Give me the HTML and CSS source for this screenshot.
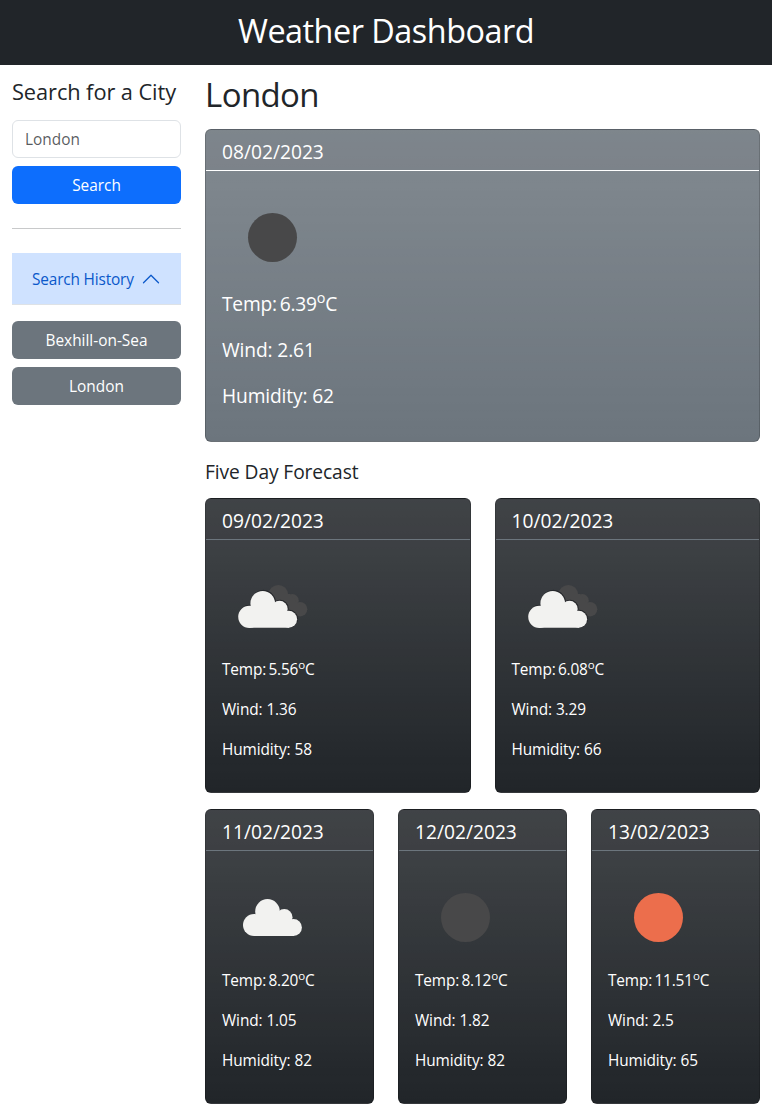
FILE: index.html
```html
<!DOCTYPE html>
<html lang="en">
<head>
<meta charset="utf-8">
<title>Weather Dashboard</title>
<link rel="stylesheet" href="styles.css">
</head>
<body>
<svg class="defs" width="0" height="0" aria-hidden="true">
  <defs>
    <g id="cloud">
      <circle cx="45.5" cy="44.4" r="12.3"/>
      <circle cx="32.1" cy="58" r="11.1"/>
      <circle cx="62.3" cy="50.2" r="8.2"/>
      <circle cx="71.4" cy="60.5" r="8.5"/>
      <path d="M32 58 36 46H58L68 53 72 60V69H32Z"/>
    </g>
  </defs>
</svg>
<header class="topbar"><h1 class="topbar-title">Weather Dashboard</h1></header>
<div class="layout">
  <aside class="sidebar">
    <h2 class="search-title">Search for a City</h2>
    <input class="search-input" type="text" placeholder="London">
    <button class="btn btn-primary">Search</button>
    <hr class="divider">
    <button class="history-toggle">
      <span>Search History</span>
      <svg class="chevron" viewBox="0 0 16 16"><path d="M2 11 8 5l6 6" fill="none" stroke="currentColor" stroke-linecap="round" stroke-linejoin="round"/></svg>
    </button>
    <div class="history">
      <button class="btn btn-secondary">Bexhill-on-Sea</button>
      <button class="btn btn-secondary">London</button>
    </div>
  </aside>
  <main class="content">
    <h2 class="city">London</h2>
    <section class="card card-today">
      <h3 class="card-header">08/02/2023</h3>
      <div class="card-body">
        <svg class="icon" viewBox="0 0 100 100"><circle cx="50.5" cy="50.5" r="24.5" fill="#484849"/></svg>
        <p class="temp">Temp: 6.39<sup>o</sup>C</p>
        <p>Wind: 2.61</p>
        <p>Humidity: 62</p>
      </div>
    </section>
    <h3 class="forecast-title">Five Day Forecast</h3>
    <div class="row row-two">
      <section class="card">
        <h3 class="card-header">09/02/2023</h3>
        <div class="card-body">
          <svg class="icon" viewBox="0 0 100 100">
            <g fill="#484849"><circle cx="56.3" cy="38.8" r="9.8"/><circle cx="70.3" cy="44.5" r="6.5"/><circle cx="78.1" cy="53.2" r="7.2"/><path d="M56 38H68L78 50V60H60Z"/></g>
            <use href="#cloud" transform="translate(-4.2 2.2)" fill="#242629" stroke="#242629" stroke-width=".8"/>
            <use href="#cloud" transform="translate(-4.8 2.8)" fill="#f2f2f0"/>
          </svg>
          <p class="temp">Temp: 5.56<sup>o</sup>C</p>
          <p>Wind: 1.36</p>
          <p>Humidity: 58</p>
        </div>
      </section>
      <section class="card">
        <h3 class="card-header">10/02/2023</h3>
        <div class="card-body">
          <svg class="icon" viewBox="0 0 100 100">
            <g fill="#484849"><circle cx="56.3" cy="38.8" r="9.8"/><circle cx="70.3" cy="44.5" r="6.5"/><circle cx="78.1" cy="53.2" r="7.2"/><path d="M56 38H68L78 50V60H60Z"/></g>
            <use href="#cloud" transform="translate(-4.2 2.2)" fill="#242629" stroke="#242629" stroke-width=".8"/>
            <use href="#cloud" transform="translate(-4.8 2.8)" fill="#f2f2f0"/>
          </svg>
          <p class="temp">Temp: 6.08<sup>o</sup>C</p>
          <p>Wind: 3.29</p>
          <p>Humidity: 66</p>
        </div>
      </section>
    </div>
    <div class="row row-three">
      <section class="card">
        <h3 class="card-header">11/02/2023</h3>
        <div class="card-body">
          <svg class="icon" viewBox="0 0 100 100"><use href="#cloud" fill="#f2f2f0"/></svg>
          <p class="temp">Temp: 8.20<sup>o</sup>C</p>
          <p>Wind: 1.05</p>
          <p>Humidity: 82</p>
        </div>
      </section>
      <section class="card">
        <h3 class="card-header">12/02/2023</h3>
        <div class="card-body">
          <svg class="icon" viewBox="0 0 100 100"><circle cx="50.5" cy="50.5" r="24.5" fill="#484849"/></svg>
          <p class="temp">Temp: 8.12<sup>o</sup>C</p>
          <p>Wind: 1.82</p>
          <p>Humidity: 82</p>
        </div>
      </section>
      <section class="card">
        <h3 class="card-header">13/02/2023</h3>
        <div class="card-body">
          <svg class="icon" viewBox="0 0 100 100"><circle cx="50.5" cy="50.5" r="24.5" fill="#ec6e4c"/></svg>
          <p class="temp">Temp: 11.51<sup>o</sup>C</p>
          <p>Wind: 2.5</p>
          <p>Humidity: 65</p>
        </div>
      </section>
    </div>
  </main>
</div>
</body>
</html>
```
FILE: styles.css
```css
* { box-sizing: border-box; }
body {
  margin: 0;
  font: 400 15.4px/24px "Open Sans", "Noto Sans", sans-serif;
  color: #212529;
  background: #fff;
}
h1, h2, h3, p { margin: 0; font-weight: 400; }
.defs { display: block; }
.topbar { height: 65px; padding-top: 10px; background: #212529; color: #fff; text-align: center; }
.topbar-title { font-size: 32.4px; line-height: 40px; letter-spacing: -.5px; }
.layout { display: grid; grid-template-columns: 193px 1fr; }
.sidebar { display: flex; flex-direction: column; padding: 13px 12px 0; }
.search-title { margin-bottom: 15px; font-size: 21.8px; line-height: 27px; letter-spacing: -.08px; white-space: nowrap; }
.search-input {
  width: 100%;
  height: 38px;
  margin-bottom: 8px;
  padding: 6px 12px;
  border: 1px solid #dee2e6;
  border-radius: 6px;
  font: inherit;
}
.search-input::placeholder { color: rgba(33, 37, 41, .75); opacity: 1; }
.btn {
  width: 100%;
  height: 38px;
  padding: 8px 12px 6px;
  border: 0;
  border-radius: 6px;
  font: inherit;
  color: #fff;
}
.btn-primary { background: #0d6efd; }
.btn-secondary { background: #6c757d; }
.divider { width: 100%; height: 1px; margin: 24px 0; border: 0; background: #c8c9ca; }
.history-toggle {
  display: flex;
  align-items: center;
  justify-content: space-between;
  height: 52px;
  padding: 0 20px;
  border: 0;
  background: #cfe2ff;
  box-shadow: inset 0 -1px #dee2e6;
  font: inherit;
  letter-spacing: -.16px;
  color: #0a58ca;
  white-space: nowrap;
}
.history-toggle span { padding-top: 2px; }
.chevron { width: 20px; height: 20px; flex: none; }
.history { display: grid; gap: 8px; margin-top: 16px; }
.content { padding: 10px 12px 0; }
.city { margin-bottom: 14px; font-size: 33px; line-height: 40px; letter-spacing: -.6px; }
.card {
  border: 1px solid rgba(0, 0, 0, .175);
  border-radius: 6px;
  color: #fff;
  background: #212529 linear-gradient(180deg, rgba(255, 255, 255, .15), rgba(255, 255, 255, 0));
}
.card-header {
  height: 41px;
  padding: 10px 16px 6px;
  border-bottom: 1px solid #6c757d;
  background: rgba(33, 37, 41, .03);
  font-size: 19.2px;
  line-height: 24px;
}
.card-body { padding: 16px 16px 30px; letter-spacing: -.1px; }
.card-body p + p { margin-top: 16px; }
.icon { display: block; width: 100px; height: 100px; margin-bottom: 2px; }
.temp { letter-spacing: -.15px; word-spacing: -1.5px; }
.temp sup { font-size: .75em; line-height: 0; vertical-align: baseline; position: relative; top: -.55em; }
.card-today { background-color: #6c757d; }
.card-today .card-header { border-bottom-color: #fff; }
.card-today .card-body { font-size: 19.2px; line-height: 30px; letter-spacing: -.13px; }
.card-today .temp { letter-spacing: -.2px; word-spacing: -2px; }
.forecast-title { margin: 18px 0 14px; font-size: 19.2px; line-height: 24px; letter-spacing: -.1px; }
.row { display: grid; gap: 24px; }
.row-two { grid-template-columns: repeat(2, 1fr); margin-bottom: 16px; }
.row-three { grid-template-columns: repeat(3, 1fr); }
```
